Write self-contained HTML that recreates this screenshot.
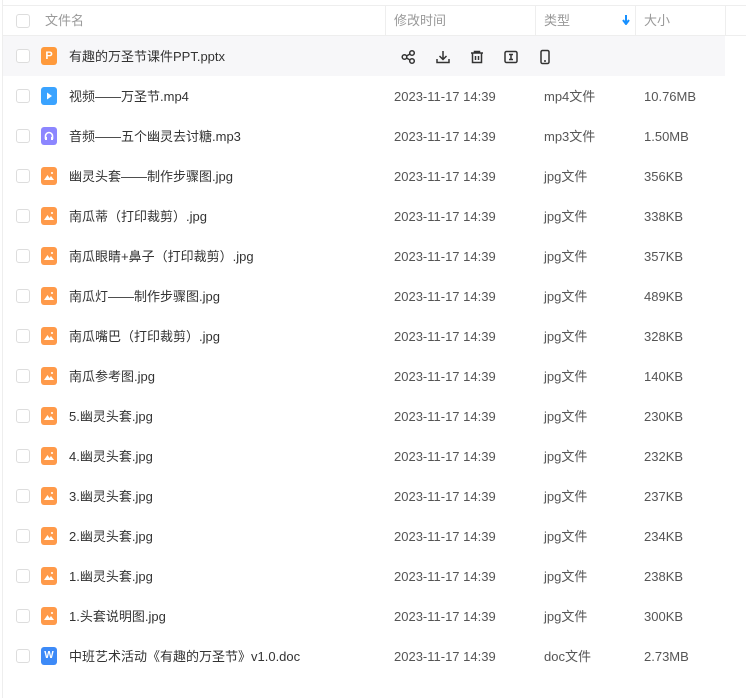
<!DOCTYPE html>
<html><head><meta charset="utf-8"><style>
*{margin:0;padding:0;box-sizing:border-box}
body{width:746px;height:698px;background:#fff;font-family:"Liberation Sans","Noto Sans CJK SC",sans-serif;font-size:13px;color:#333;position:relative;overflow:hidden}
.vl{position:absolute;left:2px;top:0;width:1px;height:698px;background:#eee}
.hdr{position:absolute;left:3px;top:5px;width:743px;height:31px;border-top:1px solid #eee;border-bottom:1px solid #eee;color:#999}
.hdr span{position:absolute;top:0;line-height:29px}
.div{position:absolute;top:0;width:1px;height:30px;background:#eee}
.cb{position:absolute;left:16px;width:14px;height:14px;border:1px solid #ddd;border-radius:3px;background:#fff}
.row{position:absolute;left:3px;width:722px;height:40px}
.row.h{background:#f7f7f9}
.row span{position:absolute;top:1px;line-height:40px;white-space:nowrap}
.ic{position:absolute;left:38px;top:11px;width:16px;height:18px;border-radius:3px}
.t{left:391px;color:#555}.ty{left:541px;color:#555}.sz{left:641px;color:#555}.nm{left:66px}
</style></head><body>
<div class="vl"></div>
<div class="hdr">
<div class="cb" style="top:8px;left:13px"></div>
<span style="left:42px">文件名</span>
<div class="div" style="left:382px"></div><span style="left:391px">修改时间</span>
<div class="div" style="left:532px"></div><span style="left:541px">类型</span>
<svg style="position:absolute;left:619px;top:9px" width="8" height="10" viewBox="0 0 8 10"><path d="M4 0v8M1 5l3 4 3-4" stroke="#1890ff" stroke-width="2" fill="none"/></svg>
<div class="div" style="left:632px"></div><span style="left:641px">大小</span>
<div class="div" style="left:722px"></div>
</div>
<div id="rows"></div>
<script>
var R=[["p","有趣的万圣节课件PPT.pptx","","",""],
["v","视频——万圣节.mp4","mp4文件","10.76MB"],
["a","音频——五个幽灵去讨糖.mp3","mp3文件","1.50MB"],
["i","幽灵头套——制作步骤图.jpg","jpg文件","356KB"],
["i","南瓜蒂（打印裁剪）.jpg","jpg文件","338KB"],
["i","南瓜眼睛+鼻子（打印裁剪）.jpg","jpg文件","357KB"],
["i","南瓜灯——制作步骤图.jpg","jpg文件","489KB"],
["i","南瓜嘴巴（打印裁剪）.jpg","jpg文件","328KB"],
["i","南瓜参考图.jpg","jpg文件","140KB"],
["i","5.幽灵头套.jpg","jpg文件","230KB"],
["i","4.幽灵头套.jpg","jpg文件","232KB"],
["i","3.幽灵头套.jpg","jpg文件","237KB"],
["i","2.幽灵头套.jpg","jpg文件","234KB"],
["i","1.幽灵头套.jpg","jpg文件","238KB"],
["i","1.头套说明图.jpg","jpg文件","300KB"],
["w","中班艺术活动《有趣的万圣节》v1.0.doc","doc文件","2.73MB"]];
var icons={
p:'<div class="ic" style="background:#ff9a3c;color:#fff;font-size:11px;font-weight:bold;text-align:center;line-height:18px">P</div>',
v:'<div class="ic" style="background:#3aa3ff"><svg width="16" height="18"><path d="M6 5.5l5 3.5-5 3.5z" fill="#fff"/></svg></div>',
a:'<div class="ic" style="background:#8c86ff"><svg width="16" height="18"><path d="M4.5 12V9a3.5 3.5 0 0 1 7 0v3" stroke="#fff" stroke-width="1.6" fill="none"/><rect x="4" y="10" width="2" height="3" fill="#fff"/><rect x="10" y="10" width="2" height="3" fill="#fff"/></svg></div>',
i:'<div class="ic" style="background:#ff9a4a"><svg width="16" height="18"><path d="M3 13l3.5-5 2 3 1.5-2 3 4z" fill="#fff"/><circle cx="11" cy="6" r="1" fill="#fff"/></svg></div>',
w:'<div class="ic" style="background:#3d8af7;color:#fff;font-size:10px;font-weight:bold;text-align:center;line-height:18px">W</div>'};
var h='';
R.forEach(function(r,k){var y=36+k*40;
h+='<div class="row'+(k==0?' h':'')+'" style="top:'+y+'px"><div class="cb" style="top:13px;left:13px"></div>'+icons[r[0]]+'<span class="nm">'+r[1]+'</span>';
if(k==0){h+='<svg style="position:absolute;left:398px;top:13px" width="150" height="16" viewBox="0 0 150 16" fill="none" stroke="#333" stroke-width="1.5">'+
'<circle cx="3.5" cy="8" r="2.3"/><circle cx="11" cy="4" r="2.3"/><circle cx="11" cy="12" r="2.3"/><path d="M5.5 7l3.5-2M5.5 9l3.5 2"/>'+
'<path d="M42 2v8M38.5 7l3.5 3.5 3.5-3.5M36 10v3.5h12V10"/>'+
'<path d="M70 4h12M73.5 4V2.5h5V4M71.5 4v9.5h9V4M74.5 7v4M77.5 7v4"/>'+
'<rect x="104" y="2.5" width="12" height="11" rx="1.5"/><path d="M108 5.5h4M110 5.5v5M108 10.5h4"/>'+
'<rect x="140" y="1.5" width="8" height="13" rx="1.5"/><path d="M143 12h2"/></svg>';}
else h+='<span class="t">2023-11-17 14:39</span><span class="ty">'+r[2]+'</span><span class="sz">'+r[3]+'</span>';
h+='</div>';});
document.getElementById('rows').innerHTML=h;
</script>
</body></html>
